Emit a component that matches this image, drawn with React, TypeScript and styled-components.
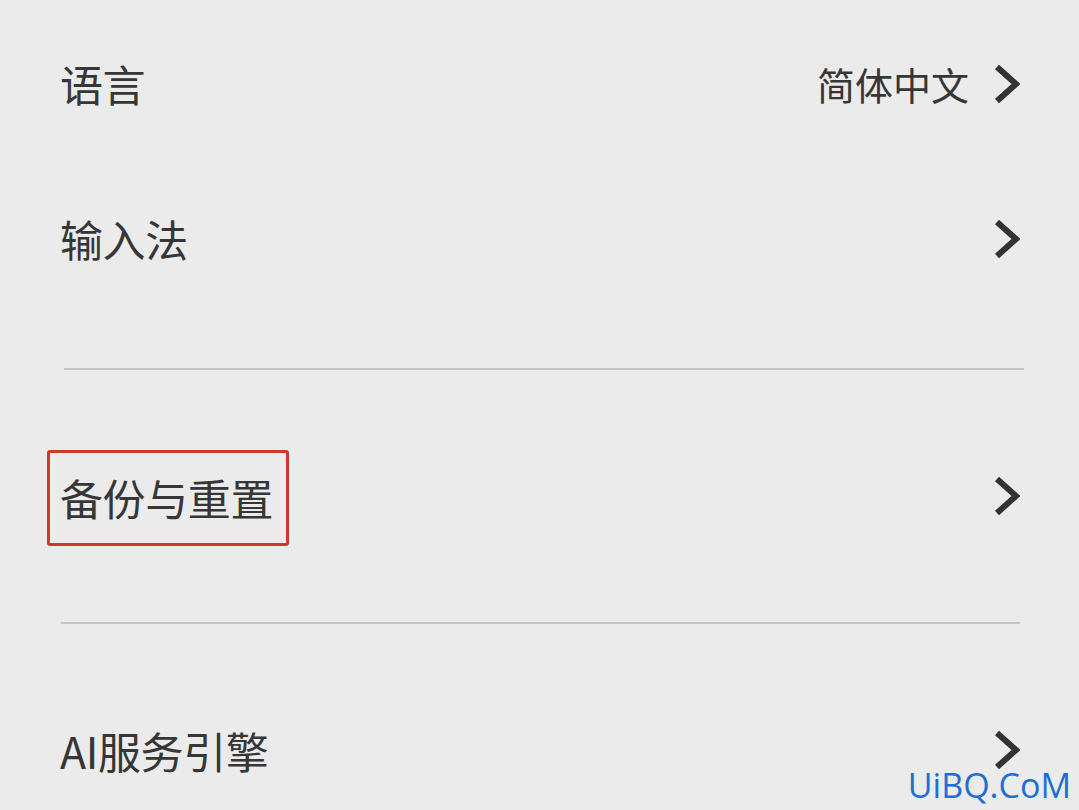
import styled, { createGlobalStyle } from 'styled-components'

const GlobalStyle = createGlobalStyle`
  html, body {
    margin: 0;
    padding: 0;
    background: #ebebeb;
  }
  body {
    font-family: "Noto Sans CJK SC", "Noto Sans", sans-serif;
    color: #363636;
  }
`

const Page = styled.div`
  position: relative;
  width: 1079px;
  height: 810px;
  overflow: hidden;
  background: #ebebeb;
  padding-top: 6px;
  box-sizing: border-box;
`

const Group = styled.div<{ $padBottom?: number }>`
  padding-bottom: ${p => p.$padBottom ?? 0}px;
`

const Row = styled.div<{ $height: number }>`
  height: ${p => p.$height}px;
  display: flex;
  align-items: center;
  justify-content: space-between;
  padding: 0 59px 0 60px;
`

const Label = styled.span`
  font-size: 43px;
  line-height: 1;
  letter-spacing: -0.4px;
`

const Highlight = styled.span`
  display: inline-flex;
  align-items: center;
  height: 88px;
  margin: 4px 0 0 -13px;
  padding: 0 13px 2px 10px;
  border: 3px solid #cf3a30;
  border-radius: 3px;
`

const Right = styled.div`
  display: flex;
  align-items: center;
  gap: 25px;
`

const Value = styled.span`
  font-size: 38px;
  line-height: 1;
`

const Divider = styled.div<{ $left: number; $right: number }>`
  height: 2px;
  background: #c6c6c6;
  margin: 0 ${p => p.$right}px 0 ${p => p.$left}px;
`

const Watermark = styled.div`
  position: absolute;
  right: 8px;
  bottom: 8px;
  font-family: "Open Sans", "DejaVu Sans", sans-serif;
  font-size: 34px;
  color: #1e6fd2;
  line-height: 1;
`

function Chevron() {
  return (
    <svg width="26" height="40" viewBox="0 0 26 40">
      <path d="M3 3 L22 20 L3 37" fill="none" stroke="#333" strokeWidth="6" strokeLinejoin="miter" />
    </svg>
  )
}

export default function App() {
  return (
    <>
      <GlobalStyle />
      <Page>
        <Group $padBottom={52}>
          <Row $height={155}>
            <Label>语言</Label>
            <Right>
              <Value>简体中文</Value>
              <Chevron />
            </Right>
          </Row>
          <Row $height={155}>
            <Label>输入法</Label>
            <Chevron />
          </Row>
        </Group>
        <Divider $left={64} $right={55} />
        <Row $height={252}>
          <Highlight>
            <Label>备份与重置</Label>
          </Highlight>
          <Chevron />
        </Row>
        <Divider $left={61} $right={59} />
        <Row $height={252}>
          <Label>AI服务引擎</Label>
          <Chevron />
        </Row>
        <Watermark>UiBQ.CoM</Watermark>
      </Page>
    </>
  )
}
